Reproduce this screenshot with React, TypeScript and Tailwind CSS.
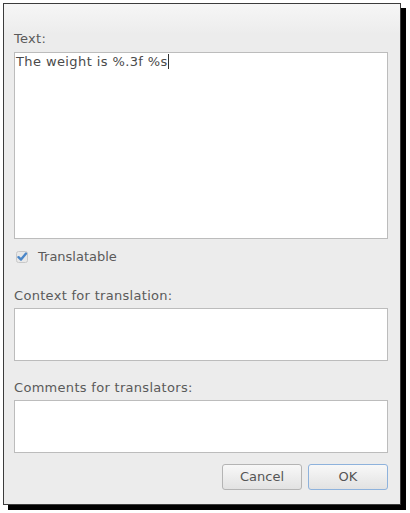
import React from "react";

const font = { fontFamily: '"DejaVu Sans", "Noto Sans", sans-serif' };

export default function App() {
  return (
    <div className="w-[410px] h-[513px] bg-white overflow-hidden" style={font}>
      <div className="ml-[3px] mt-[3px] w-[398px] h-[502px] border border-[#3c3c3c] shadow-[5px_5px_0_0_#000] bg-[linear-gradient(#f6f6f6,#ececec_30px,#ececec)] flex flex-col pl-[10px] pr-[12px] text-[13px] text-[#5a5a5a]">
        <div className="mt-[27px] h-[16px] leading-[16px] tracking-[0.3px]">Text:</div>
        <div className="mt-[5px] h-[187px] bg-white border border-[#bcbcbc] px-[1px] pt-[1px] text-[#4a4a4a] leading-[16px] tracking-[0.4px]">
          The weight is %.3f %s<span className="inline-block w-px h-[15px] bg-[#333] align-[-3px]"></span>
        </div>
        <div className="mt-[10px] h-[16px] flex items-center gap-[10px] pl-[2px]">
          <svg width="12" height="12" viewBox="0 0 12 12">
            <rect x="0.5" y="0.5" width="11" height="11" rx="2" fill="#e8e8e8" stroke="#c8c8c8" />
            <path d="M2.5 6.2 L5 8.6 L10 2.6" fill="none" stroke="#4a86c8" strokeWidth="2.4" strokeLinecap="round" strokeLinejoin="round" />
          </svg>
          <span className="leading-[16px]">Translatable</span>
        </div>
        <div className="mt-[23px] h-[16px] leading-[16px] tracking-[0.3px]">Context for translation:</div>
        <div className="mt-[4px] h-[53px] bg-white border border-[#bcbcbc]"></div>
        <div className="mt-[19px] h-[16px] leading-[16px] tracking-[0.3px]">Comments for translators:</div>
        <div className="mt-[4px] h-[53px] bg-white border border-[#bcbcbc]"></div>
        <div className="mt-[11px] flex justify-end gap-[6px]">
          <button className="w-[80px] h-[26px] rounded-[3px] border border-[#b4b4b4] bg-[linear-gradient(#f8f8f8,#e2e2e2)] text-[#555] text-[13px]" style={font}>Cancel</button>
          <button className="w-[80px] h-[26px] rounded-[3px] border border-[#8eb2dc] bg-[linear-gradient(#f8f8f8,#e2e2e2)] text-[#555] text-[13px]" style={font}>OK</button>
        </div>
      </div>
    </div>
  );
}
